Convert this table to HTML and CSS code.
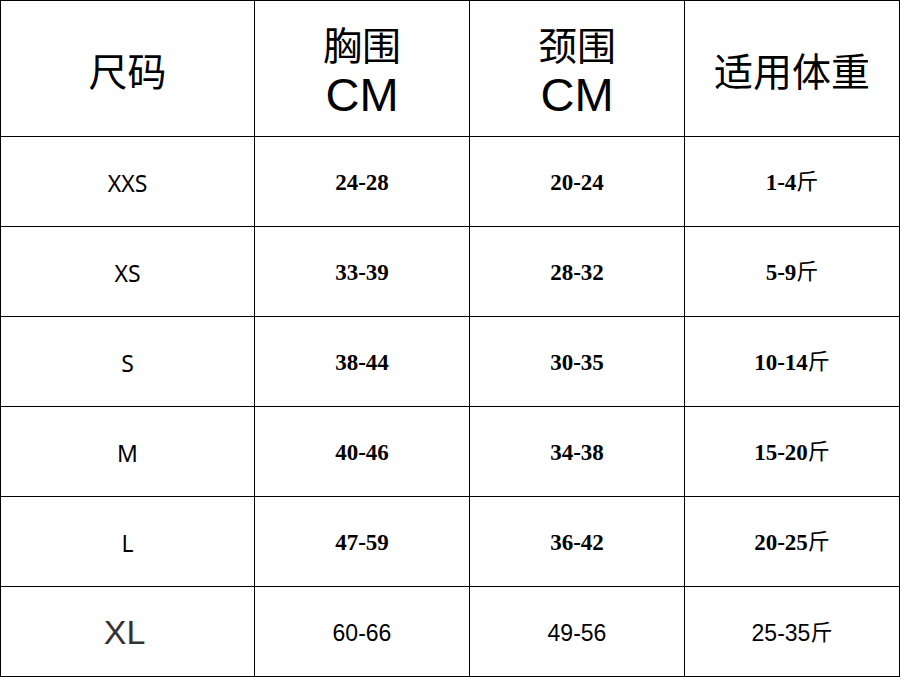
FILE: index.html
```html
<!DOCTYPE html>
<html lang="zh">
<head>
<meta charset="utf-8">
<title>尺码表</title>
<link rel="stylesheet" href="styles.css">
</head>
<body>
<div class="sheet">
  <div class="cell head"><span class="cjk">尺码</span></div>
  <div class="cell head"><span class="cjk">胸围</span><span class="cm">CM</span></div>
  <div class="cell head"><span class="cjk">颈围</span><span class="cm">CM</span></div>
  <div class="cell head"><span class="cjk">适用体重</span></div>

  <div class="cell size">XXS</div>
  <div class="cell num">24-28</div>
  <div class="cell num">20-24</div>
  <div class="cell num"><span>1-4<span class="jin">斤</span></span></div>

  <div class="cell size">XS</div>
  <div class="cell num">33-39</div>
  <div class="cell num">28-32</div>
  <div class="cell num"><span>5-9<span class="jin">斤</span></span></div>

  <div class="cell size">S</div>
  <div class="cell num">38-44</div>
  <div class="cell num">30-35</div>
  <div class="cell num"><span>10-14<span class="jin">斤</span></span></div>

  <div class="cell size">M</div>
  <div class="cell num">40-46</div>
  <div class="cell num">34-38</div>
  <div class="cell num"><span>15-20<span class="jin">斤</span></span></div>

  <div class="cell size">L</div>
  <div class="cell num">47-59</div>
  <div class="cell num">36-42</div>
  <div class="cell num"><span>20-25<span class="jin">斤</span></span></div>

  <div class="cell size xl">XL</div>
  <div class="cell plain">60-66</div>
  <div class="cell plain">49-56</div>
  <div class="cell plain"><span>25-35<span class="jin">斤</span></span></div>
</div>
</body>
</html>
```
FILE: styles.css
```css
html, body {
  margin: 0;
  padding: 0;
  background: #fff;
}

.sheet {
  display: grid;
  grid-template-columns: 253px 214px 214px 214px;
  grid-template-rows: 135px repeat(6, 89px);
  gap: 1px;
  padding: 1px;
  width: 900px;
  box-sizing: border-box;
  background: #000;
}

.cell {
  background: #fff;
  display: flex;
  flex-direction: column;
  align-items: center;
  justify-content: center;
  color: #000;
}

.head {
  font-family: "Noto Sans CJK SC", "Noto Sans", sans-serif;
  font-size: 39px;
  line-height: 52px;
}

.head .cjk {
  display: block;
}

.head .cm {
  display: block;
  font-family: "Liberation Sans", Arial, sans-serif;
  font-size: 47px;
}

.size {
  font-family: "Noto Sans", "Noto Sans CJK SC", sans-serif;
  font-size: 23px;
  padding-top: 2px;
}

.size.xl {
  font-family: "Liberation Sans", Arial, sans-serif;
  font-size: 34px;
  color: #333;
  padding-right: 6px;
}

.num {
  font-family: "Liberation Serif", "Times New Roman", serif;
  font-weight: bold;
  font-size: 23px;
  line-height: 28px;
  padding-top: 2px;
}

.plain {
  font-family: "Liberation Sans", Arial, sans-serif;
  font-size: 23px;
  line-height: 28px;
  padding-top: 2px;
}

.jin {
  font-family: "Noto Sans CJK SC", sans-serif;
  font-weight: normal;
  font-size: 22px;
  line-height: 0;
  vertical-align: 1px;
}
```
